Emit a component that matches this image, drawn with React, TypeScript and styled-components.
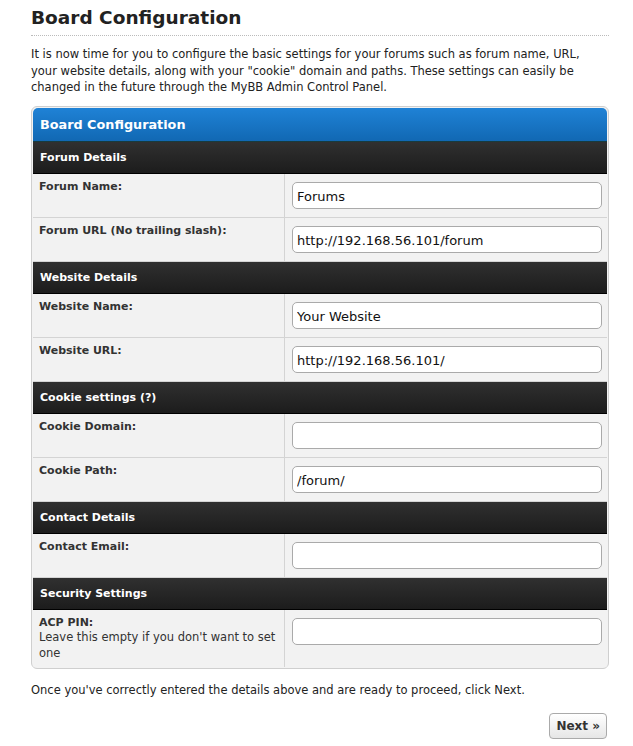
import React from "react";
import styled, { createGlobalStyle } from "styled-components";

const Global = createGlobalStyle`
  html, body { margin: 0; padding: 0; background: #fff; }
  body { font-family: "DejaVu Sans", "Lucida Grande", Verdana, sans-serif; color: #222; }
`;

const Page = styled.div`
  width: 578px;
  padding: 4px 0 0 31px;
  display: flex;
  flex-direction: column;
`;

const Title = styled.h1`
  margin: 0;
  font-size: 18.5px;
  font-weight: bold;
  color: #222;
  line-height: 27px;
  padding-bottom: 4px;
  border-bottom: 1px dotted #bbb;
`;

const Intro = styled.p`
  margin: 10px 0 10px;
  font-size: 11.5px;
  line-height: 16.5px;
  color: #222;
`;

const Panel = styled.div`
  border: 1px solid #cfcfcf;
  border-radius: 6px;
  padding: 1px;
  overflow: hidden;
  background: #f2f2f2;
`;

const PanelHead = styled.div`
  height: 33px;
  border-radius: 5px 5px 0 0;
  background: linear-gradient(#1f82d6, #1168b3);
  border-bottom: 1px solid #173b3f;
  color: #fff;
  font-weight: bold;
  font-size: 12.8px;
  display: flex;
  align-items: center;
  padding-left: 7px;
`;

const SectionHead = styled.div`
  height: 31px;
  background: linear-gradient(#303030, #1c1c1c);
  border-bottom: 1px solid #000;
  color: #fff;
  font-weight: bold;
  font-size: 11px;
  display: flex;
  align-items: center;
  padding-left: 7px;
`;

const Row = styled.div<{ $last?: boolean }>`
  display: grid;
  grid-template-columns: 252px 1fr;
  border-bottom: ${(p) => (p.$last ? "none" : "1px solid #d4d4d4")};
  background: #f2f2f2;
`;

const LabelCell = styled.div`
  padding: 5px 6px 6px 6px;
  border-right: 1px solid #d4d4d4;
  font-size: 11px;
  line-height: 15.5px;
  color: #333;
`;

const LabelName = styled.div`
  font-weight: bold;
  color: #333;
`;

const Desc = styled.div`
  color: #333;
  font-size: 11.5px;
`;

const FieldCell = styled.div`
  padding: 8px 5px 8px 7px;
`;

const Input = styled.input`
  box-sizing: border-box;
  width: 100%;
  height: 27px;
  border: 1px solid #aaa;
  border-radius: 5px;
  background: #fff;
  font-family: "DejaVu Sans", "Lucida Grande", Verdana, sans-serif;
  font-size: 13px;
  color: #111;
  padding: 2px 4px 0;
  outline: none;
`;

const Outro = styled.p`
  margin: 13px 0 0 0;
  font-size: 11.5px;
  line-height: 16px;
  color: #222;
`;

const ButtonRow = styled.div`
  display: flex;
  justify-content: flex-end;
  margin-top: 15px;
`;

const NextButton = styled.button`
  margin-right: 2px;
  height: 26px;
  padding: 0 6px;
  border: 1px solid #aaa;
  border-radius: 4px;
  background: linear-gradient(#fff, #e6e6e6);
  font-family: "DejaVu Sans", "Lucida Grande", Verdana, sans-serif;
  font-weight: bold;
  font-size: 12px;
  color: #333;
`;

type Field = { label: string; value?: string; desc?: string };
type Section = { title: string; fields: Field[] };

const sections: Section[] = [
  {
    title: "Forum Details",
    fields: [
      { label: "Forum Name:", value: "Forums" },
      { label: "Forum URL (No trailing slash):", value: "http://192.168.56.101/forum" },
    ],
  },
  {
    title: "Website Details",
    fields: [
      { label: "Website Name:", value: "Your Website" },
      { label: "Website URL:", value: "http://192.168.56.101/" },
    ],
  },
  {
    title: "Cookie settings (?)",
    fields: [
      { label: "Cookie Domain:", value: "" },
      { label: "Cookie Path:", value: "/forum/" },
    ],
  },
  { title: "Contact Details", fields: [{ label: "Contact Email:", value: "" }] },
  {
    title: "Security Settings",
    fields: [{ label: "ACP PIN:", value: "", desc: "Leave this empty if you don't want to set one" }],
  },
];

export default function App() {
  return (
    <>
      <Global />
      <Page>
        <Title>Board Configuration</Title>
        <Intro>
          It is now time for you to configure the basic settings for your forums such as forum name, URL,
          <br />
          your website details, along with your "cookie" domain and paths. These settings can easily be
          <br />
          changed in the future through the MyBB Admin Control Panel.
        </Intro>
        <Panel>
          <PanelHead>Board Configuration</PanelHead>
          {sections.map((s, si) => (
            <React.Fragment key={s.title}>
              <SectionHead>{s.title}</SectionHead>
              {s.fields.map((f, fi) => (
                <Row
                  key={f.label}
                  $last={si === sections.length - 1 && fi === s.fields.length - 1}
                >
                  <LabelCell>
                    <LabelName>{f.label}</LabelName>
                    {f.desc && <Desc>{f.desc}</Desc>}
                  </LabelCell>
                  <FieldCell>
                    <Input type="text" defaultValue={f.value} />
                  </FieldCell>
                </Row>
              ))}
            </React.Fragment>
          ))}
        </Panel>
        <Outro>Once you've correctly entered the details above and are ready to proceed, click Next.</Outro>
        <ButtonRow>
          <NextButton>Next »</NextButton>
        </ButtonRow>
      </Page>
    </>
  );
}
